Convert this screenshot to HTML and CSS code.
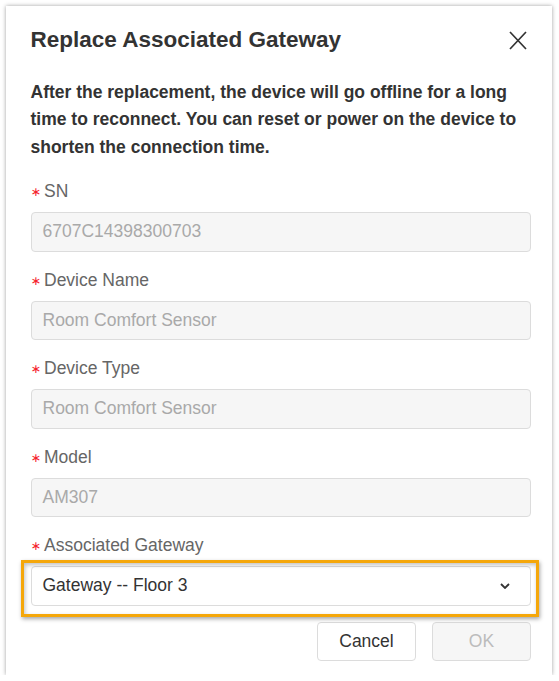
FILE: index.html
```html
<!DOCTYPE html>
<html lang="en">
<head>
<meta charset="utf-8">
<title>Replace Associated Gateway</title>
<link rel="stylesheet" href="styles.css">
</head>
<body>
<div class="dialog">
  <div class="header">
    <h1 class="title">Replace Associated Gateway</h1>
    <button class="close" type="button" aria-label="Close">
      <svg width="18" height="19" viewBox="0 0 18 19"><path d="M1 1 L17 18 M17 1 L1 18" stroke="#333" stroke-width="1.7" fill="none"/></svg>
    </button>
  </div>
  <p class="desc">After the replacement, the device will go offline for a long time to reconnect. You can reset or power on the device to shorten the connection time.</p>

  <div class="field">
    <div class="label"><span class="req">∗</span>SN</div>
    <div class="input">6707C14398300703</div>
  </div>
  <div class="field">
    <div class="label"><span class="req">∗</span>Device Name</div>
    <div class="input">Room Comfort Sensor</div>
  </div>
  <div class="field">
    <div class="label"><span class="req">∗</span>Device Type</div>
    <div class="input">Room Comfort Sensor</div>
  </div>
  <div class="field">
    <div class="label"><span class="req">∗</span>Model</div>
    <div class="input">AM307</div>
  </div>
  <div class="field field-last">
    <div class="label"><span class="req">∗</span>Associated Gateway</div>
    <div class="select">
      <span>Gateway -- Floor 3</span>
      <svg class="chev" width="10" height="6" viewBox="0 0 10 6"><path d="M1 1 L5 5 L9 1" stroke="#333" stroke-width="1.8" fill="none"/></svg>
    </div>
  </div>

  <div class="footer">
    <button class="btn" type="button">Cancel</button>
    <button class="btn btn-disabled" type="button">OK</button>
  </div>

  <div class="highlight"></div>
</div>
</body>
</html>
```

FILE: styles.css
```css
html, body {
  margin: 0;
  padding: 0;
  background: #ffffff;
}
body {
  font-family: "Liberation Sans", Arial, sans-serif;
  color: #333;
}
.dialog {
  position: relative;
  box-sizing: border-box;
  margin: 6px 0 0 6px;
  width: 546px;
  height: 669px;
  padding: 19px 21px 14px 24.5px;
  background: #fff;
  box-shadow: 0 0 4px rgba(0, 0, 0, 0.38);
}
.header {
  display: flex;
  align-items: center;
  justify-content: space-between;
  height: 30px;
}
.title {
  margin: 0;
  font-size: 22.5px;
  line-height: 30px;
  font-weight: bold;
  color: #333;
}
.close {
  display: flex;
  align-items: center;
  justify-content: center;
  padding: 0;
  margin: 0 4px 0 0;
  border: 0;
  background: transparent;
  width: 18px;
  height: 19px;
}
.desc {
  margin: 23.5px 0 0 0;
  font-size: 17.5px;
  line-height: 27.5px;
  font-weight: bold;
  color: #333;
}
.field {
  margin-bottom: 16px;
}
.desc + .field {
  margin-top: 18px;
}
.label {
  height: 25px;
  font-size: 17.5px;
  line-height: 25px;
  color: #666;
  margin-bottom: 8px;
  white-space: nowrap;
}
.req {
  display: inline-block;
  width: 13.5px;
  line-height: 0;
  color: #f5222d;
  font-family: "DejaVu Sans", sans-serif;
  font-size: 12.5px;
  vertical-align: 1px;
}
.input, .select {
  box-sizing: border-box;
  height: 39.5px;
  border: 1px solid #dcdcdc;
  border-radius: 4px;
  padding: 0 11px;
  font-size: 17.5px;
  display: flex;
  align-items: center;
}
.input {
  background: #f6f6f6;
  color: #a9a9a9;
}
.select {
  background: #fff;
  color: #333;
  justify-content: space-between;
  padding-right: 20px;
}
.chev {
  display: block;
}
.footer {
  display: flex;
  justify-content: flex-end;
  gap: 16px;
}
.btn {
  box-sizing: border-box;
  width: 99px;
  height: 39px;
  border: 1px solid #dcdcdc;
  border-radius: 4px;
  background: #fff;
  color: #333;
  font-family: "Liberation Sans", Arial, sans-serif;
  font-size: 17.5px;
  padding: 0;
}
.btn-disabled {
  background: #f6f6f6;
  color: #bcbcbc;
}
.highlight {
  position: absolute;
  left: 15px;
  top: 554px;
  width: 518px;
  height: 57px;
  box-sizing: border-box;
  border: 3.5px solid #f5a70a;
  box-shadow: 1px 2px 4px rgba(0, 0, 0, 0.35), inset 1px 2px 4px rgba(0, 0, 0, 0.25);
  pointer-events: none;
}
```
